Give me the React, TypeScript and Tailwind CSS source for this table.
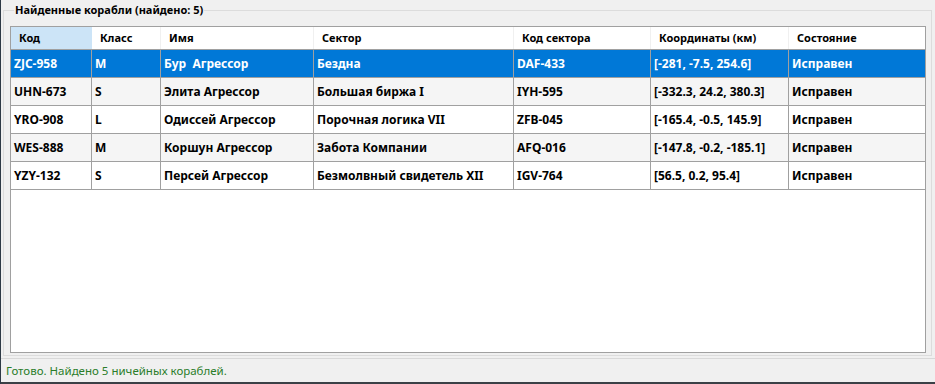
const columns = ["Код", "Класс", "Имя", "Сектор", "Код сектора", "Координаты (км)", "Состояние"];

const ships = [
  ["ZJC-958", "M", "Бур  Агрессор", "Бездна", "DAF-433", "[-281, -7.5, 254.6]", "Исправен"],
  ["UHN-673", "S", "Элита Агрессор", "Большая биржа I", "IYH-595", "[-332.3, 24.2, 380.3]", "Исправен"],
  ["YRO-908", "L", "Одиссей Агрессор", "Порочная логика VII", "ZFB-045", "[-165.4, -0.5, 145.9]", "Исправен"],
  ["WES-888", "M", "Коршун Агрессор", "Забота Компании", "AFQ-016", "[-147.8, -0.2, -185.1]", "Исправен"],
  ["YZY-132", "S", "Персей Агрессор", "Безмолвный свидетель XII", "IGV-764", "[56.5, 0.2, 95.4]", "Исправен"],
];

const grid = "grid grid-cols-[81px_69px_153px_200px_137px_138px_136px]";

export default function App() {
  return (
    <div className="flex h-[384px] w-[935px] flex-col overflow-hidden border-l border-[#2e3a46] bg-[#f0f0f0] font-['Noto_Sans',sans-serif] text-[12px] leading-[16px] text-black">
      <fieldset className="ml-[2px] mr-[3px] mt-[2px] h-[354px] shrink-0 border border-[#dcdcdc] pb-[3px] pl-[6px] pr-[5px]">
        <legend className="ml-[4px] px-[1px] text-[11px] font-bold leading-[16px]">Найденные корабли (найдено: 5)</legend>
        <div className="mt-[8px] flex h-[327px] flex-col border border-[#a0a0a0] bg-white">
          <div className={`${grid} h-[23px] border-b border-[#a0a0a0] text-[11px] font-bold`}>
            {columns.map((c, i) => (
              <div
                key={c}
                className={`flex items-center pl-[8px] ${i === 0 ? "bg-[#cce4f7]" : "border-r border-[#f0f0f0]"} ${i === 6 ? "border-r-0" : ""}`}
              >
                {c}
              </div>
            ))}
          </div>
          {ships.map((row, r) => (
            <div
              key={row[0]}
              className={`${grid} h-[28px] border-b border-[#a0a0a0] font-bold ${
                r === 0 ? "bg-[#0078d7] text-white" : r % 2 === 1 ? "bg-[#f5f5f5]" : "bg-white"
              }`}
            >
              {row.map((cell, i) => (
                <div
                  key={i}
                  className={`flex items-center whitespace-pre pl-[3px] ${i < 6 ? "border-r border-[#a0a0a0]" : ""}`}
                >
                  {cell}
                </div>
              ))}
            </div>
          ))}
        </div>
      </fieldset>
      <div className="mt-[2px] flex h-[24px] shrink-0 items-center border-t border-[#d8d8d8] pl-[5px] pt-[1px] text-[11.5px] text-[#2a7d2a]">
        Готово. Найдено 5 ничейных кораблей.
      </div>
      <div className="h-[2px] shrink-0 bg-[#3b4046]" />
    </div>
  );
}
